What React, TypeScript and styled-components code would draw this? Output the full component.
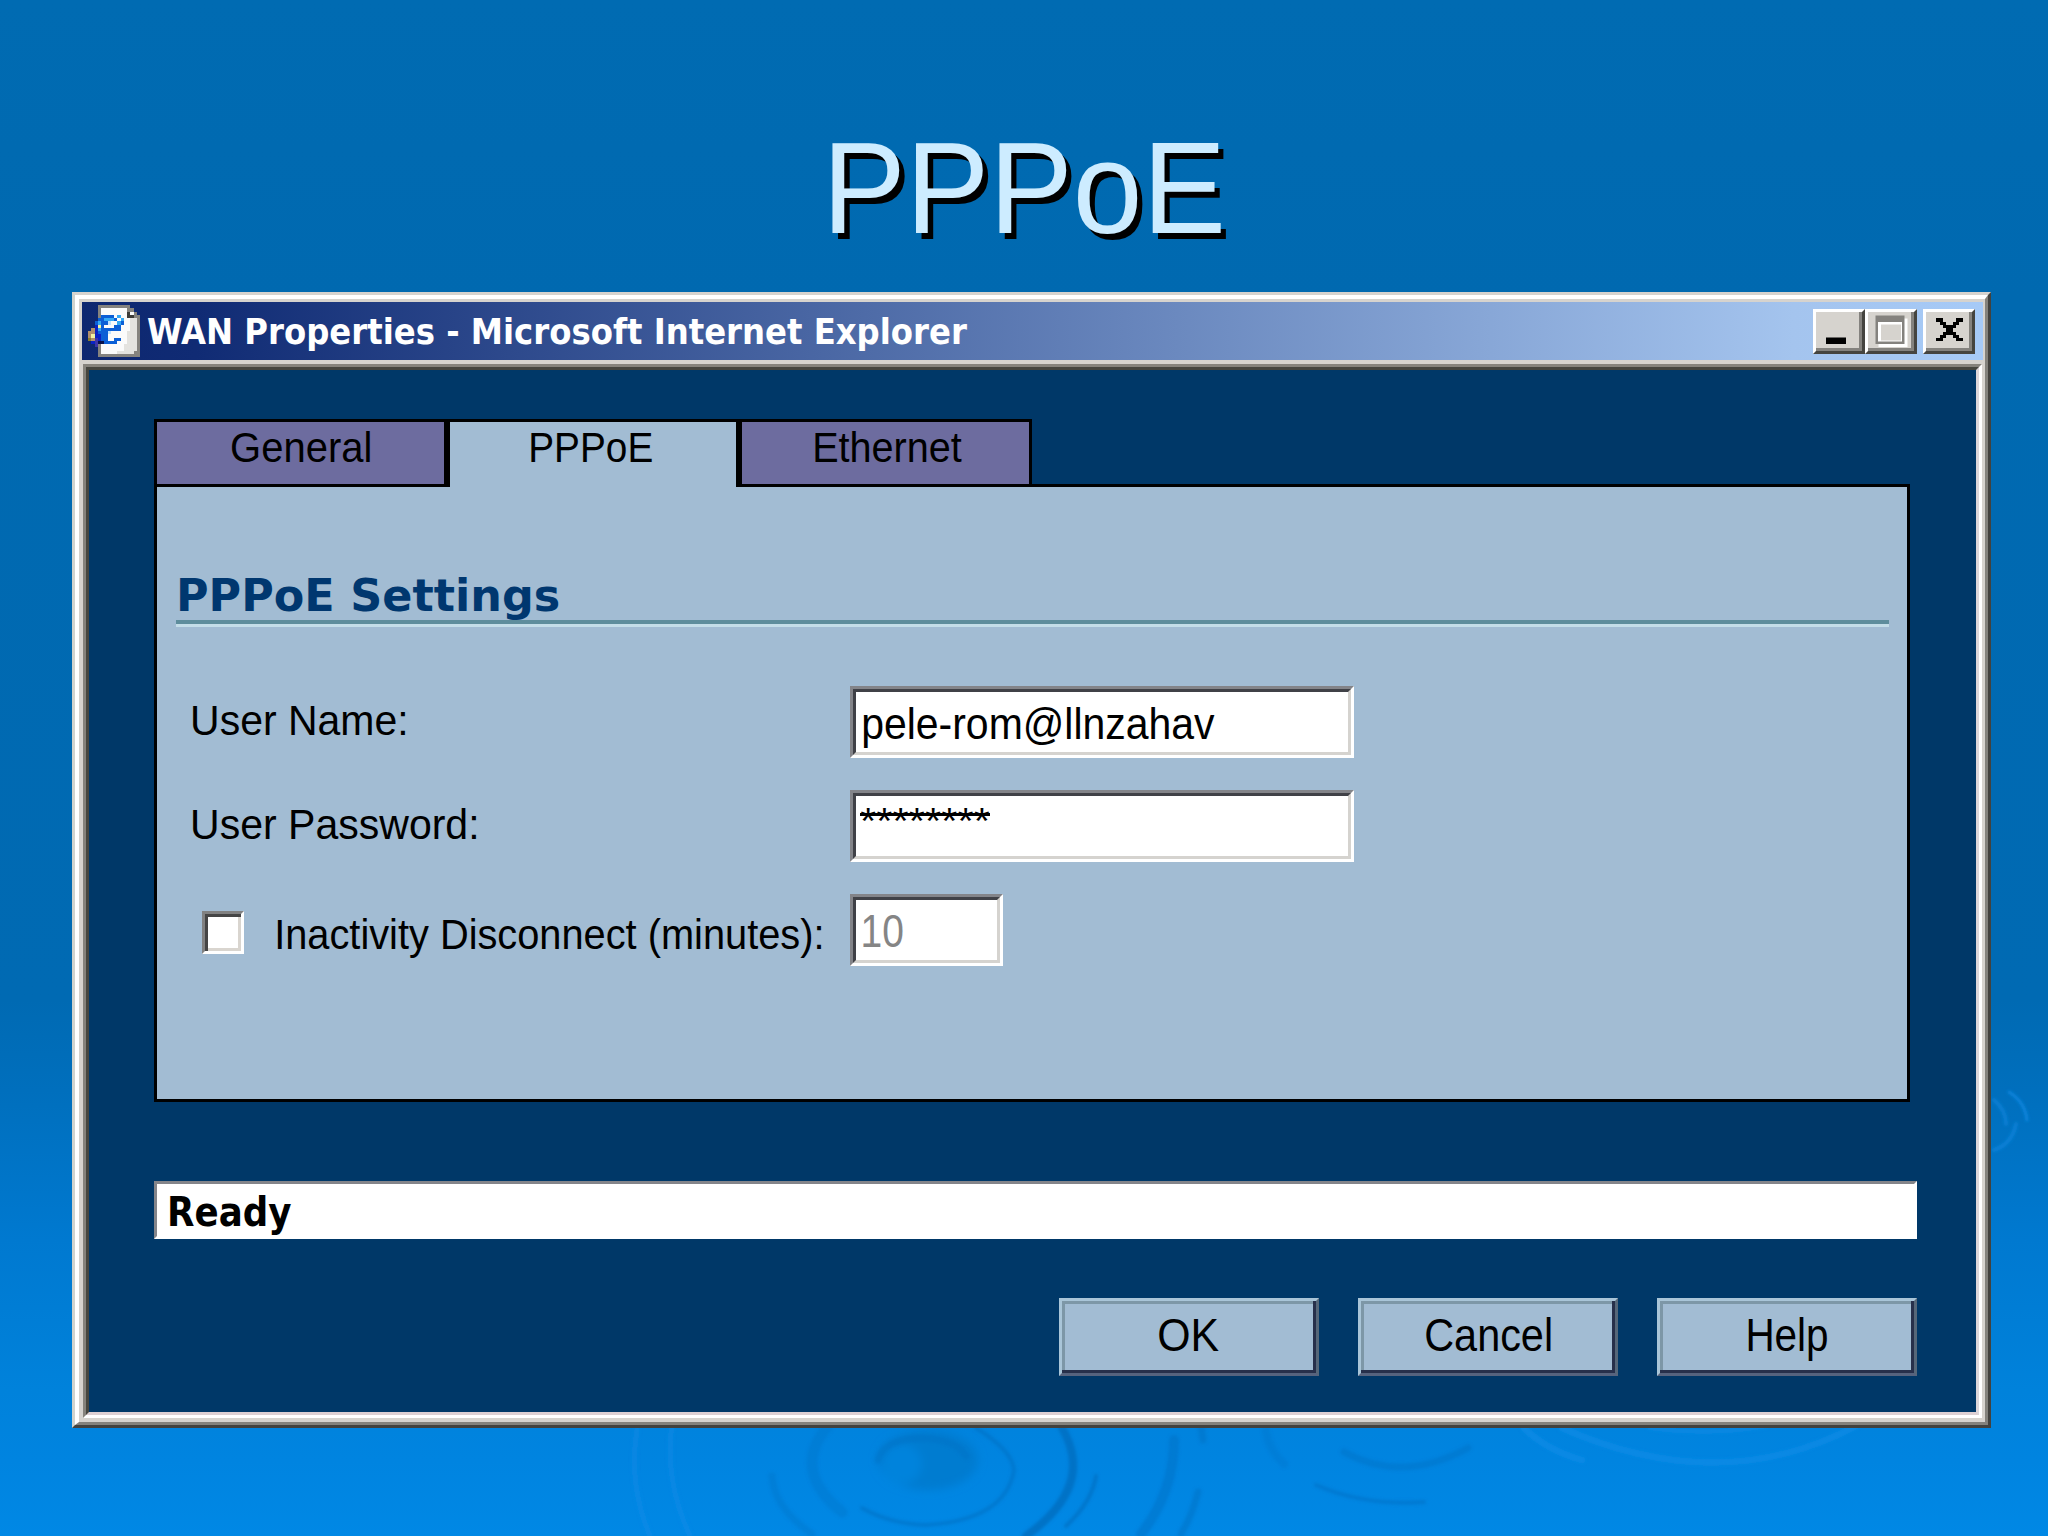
import React from "react";
import styled, { createGlobalStyle } from "styled-components";

const SANS = '"Liberation Sans", Arial, sans-serif';
const UI = '"DejaVu Sans Condensed", "DejaVu Sans", sans-serif';
const WIDE = '"DejaVu Sans", sans-serif';

const Global = createGlobalStyle`
  body { margin: 0; background: #0069b1; overflow: hidden; }
  * { box-sizing: border-box; }
`;

/* ---------- fitted text ---------- */

const FitBox = styled.span<{ $line: number; $dx: number; $dy: number }>`
  display: block;
  flex: none;
  height: ${(p) => p.$line}px;
  line-height: ${(p) => p.$line}px;
  margin-top: ${(p) => p.$dy}px;
  margin-left: ${(p) => p.$dx}px;
  text-align: left;
  white-space: nowrap;
`;

const FitInk = styled.span<{ $size: number; $family: string; $bold: boolean }>`
  display: inline-block;
  transform-origin: 0 50%;
  font-family: ${(p) => p.$family};
  font-size: ${(p) => p.$size}px;
  font-weight: ${(p) => (p.$bold ? 700 : 400)};
`;

type FitProps = {
  children: string;
  width: number;
  size: number;
  family?: string;
  bold?: boolean;
  line?: number;
  dx?: number;
  dy?: number;
};

let pen: CanvasRenderingContext2D | null = null;

/* Sets a run of text so that its ink is exactly `width` pixels wide. */
function Fit({ children, width, size, family = SANS, bold = false, line = 50, dx = 0, dy = 0 }: FitProps) {
  pen = pen || document.createElement("canvas").getContext("2d")!;
  pen.font = `${bold ? 700 : 400} ${size}px ${family}`;
  const m = pen.measureText(children);
  const scale = width / (m.actualBoundingBoxLeft + m.actualBoundingBoxRight);
  return (
    <FitBox $line={line} $dx={dx} $dy={dy} style={{ width }}>
      <FitInk
        $size={size}
        $family={family}
        $bold={bold}
        style={{ transform: `scaleX(${scale}) translateX(${m.actualBoundingBoxLeft}px)` }}
      >
        {children}
      </FitInk>
    </FitBox>
  );
}

/* ---------- slide ---------- */

const Slide = styled.main`
  position: relative;
  width: 2048px;
  height: 1536px;
  overflow: hidden;
  display: flex;
  flex-direction: column;
  padding: 113px 0 0 72px;
  background: linear-gradient(
    #006bb2 0, #0069b0 300px, #006ab3 1000px, #006fbd 1090px,
    #0079d0 1240px, #0082db 1390px, #0084e0 1460px, #0088e5 1536px
  );
`;

const Ripples = styled.svg`
  position: absolute;
  inset: 0;
  fill: none;
  stroke-linecap: round;
`;

const SlideTitle = styled.h1`
  position: relative;
  margin: 0 0 29px 760px;
  height: 150px;
  color: #cdecff;
  text-shadow: 5.5px 5.5px 0 #000;
`;

/* ---------- window ---------- */

const Frame = styled.section`
  position: relative;
  width: 1919px;
  height: 1136px;
  background: #d6d3ce;
  border: 3px solid;
  border-color: #d6d3ce #43423e #43423e #d0d3ce;
`;

const FrameInner = styled.div`
  width: 100%;
  height: 100%;
  display: flex;
  flex-direction: column;
  border: solid;
  border-width: 4px 3px 3px 4px;
  border-color: #fff #84827c #84827c #fff;
  padding: 3px 3px 4px 3px;
`;

const TitleBar = styled.header`
  display: flex;
  align-items: center;
  height: 58px;
  margin-right: -1px;
  padding: 0 8px 0 6px;
  background: linear-gradient(90deg, #0d2770 0, #102b74 6%, #a4c4ee 90%, #a6caf7 100%);
  color: #fff;
`;

const PageIcon = styled.svg`
  flex: none;
  width: 52px;
  height: 52px;
  margin-right: 7px;
`;

const Controls = styled.div`
  display: flex;
  margin-left: auto;
`;

const Control = styled.button<{ $gap?: number }>`
  width: 52px;
  height: 45px;
  margin: 0 0 0 ${(p) => p.$gap || 0}px;
  padding: 0;
  border: 3px solid;
  border-color: #fff #45443f #45443f #fff;
  background: #d6d3ce;
  box-shadow: inset -3px -3px 0 #84827e;
`;

const Glyph = styled.svg`
  display: block;
  width: 46px;
  height: 39px;
`;

const Client = styled.div`
  flex: 1;
  margin: 4px 0 0 1px;
  border: 3px solid;
  border-color: #86837c #fff #fff #86837c;
`;

const ClientInner = styled.div`
  height: 100%;
  border: 3px solid;
  border-color: #46463f #dcd6da #ddd0d3 #46463f;
  background: #003868;
  padding: 49px 59px 0 65px;
  display: flex;
  flex-direction: column;
`;

/* ---------- tabs and panel ---------- */

const Tabs = styled.nav`
  position: relative;
  display: flex;
  width: 878px;
  margin-bottom: -3px;
`;

const Tab = styled.div<{ $active?: boolean }>`
  flex: 1;
  height: 68px;
  display: flex;
  justify-content: center;
  border: 3px solid #000;
  border-bottom-width: ${(p) => (p.$active ? 0 : 3)}px;
  background: ${(p) => (p.$active ? "#a2bcd3" : "#6d6c9f")};
  color: #000;
`;

const Panel = styled.section`
  width: 1756px;
  height: 618px;
  border: 3px solid #000;
  background: #a2bcd3;
  padding: 83px 18px 0 19px;
`;

const Heading = styled.h2`
  margin: 0;
  height: 54px;
  padding: 1px 0 0 3px;
  border-bottom: 4px solid #5e8d9c;
  box-shadow: 0 3px 0 #c4dde8;
  color: #00376f;
`;

const Form = styled.div`
  display: grid;
  grid-template-columns: 659px auto;
  grid-auto-rows: 72px;
  row-gap: 32px;
  margin: 62px 0 0 15px;
  justify-content: start;
`;

const LabelCell = styled.label<{ $shift?: number }>`
  display: flex;
  align-items: center;
  padding-top: ${(p) => Math.max(0, p.$shift || 0)}px;
  padding-bottom: ${(p) => Math.max(0, -(p.$shift || 0))}px;
  color: #000;
`;

const CheckBox = styled.span`
  width: 42px;
  height: 43px;
  margin: 0 33px 6px 11px;
  border: 3px solid;
  border-color: #818181 #fff #fff #818181;
  background: #fff;
  box-shadow: inset 3px 3px 0 #454545, inset -3px -3px 0 #d9d5cf;
`;

const Field = styled.div<{ $width: number; $disabled?: boolean }>`
  width: ${(p) => p.$width}px;
  height: 72px;
  border: 3px solid;
  border-color: #838489 #fff #fff #838489;
  background: #fff;
  color: ${(p) => (p.$disabled ? "#858585" : "#000")};
`;

const FieldInner = styled.div<{ $pad: number }>`
  height: 100%;
  display: flex;
  align-items: center;
  padding-left: ${(p) => p.$pad}px;
  border: 3px solid;
  border-color: #404147 #d5d3cf #d5d3cf #404147;
`;

const Mask = styled.div`
  display: flex;
  margin-top: -8px;
  background: linear-gradient(#000, #000) 0 16px / 100% 3px no-repeat;
`;

/* ---------- footer ---------- */

const Status = styled.div`
  height: 58px;
  margin-top: 79px;
  padding-left: 13px;
  display: flex;
  align-items: center;
  background: #fff;
  border: 3px solid;
  border-color: #84858a #fff #fff #84858a;
  color: #000;
`;

const Buttons = styled.div`
  display: flex;
  justify-content: flex-end;
  gap: 39px;
  margin-top: 59px;
`;

const PushButton = styled.button`
  width: 260px;
  height: 78px;
  padding: 0;
  display: flex;
  align-items: center;
  justify-content: center;
  border: 3px solid;
  border-color: #a9c5d8 #566779 #56637e #a9c5d8;
  background: #a2bcd3;
  box-shadow: inset -3px -3px 0 #27304b, inset 3px 3px 0 #7d97a7;
  color: #000;
`;

/* ---------- pixel drawings ---------- */

const ICON_COLORS: Record<string, string> = {
  g: "#85837e",
  d: "#3c3c38",
  w: "#fbfbfa",
  s: "#e4e3df",
  b: "#0b5fd6",
  n: "#0a22c4",
  c: "#35a8f4",
  l: "#bfe3ff",
  y: "#f2f2a0",
  t: "#b08f6c",
  o: "#8a7d2c",
  k: "#08104a",
  v: "#3d35a8",
};

const ICON_ROWS = [
  "...gggggggggg...",
  "...gwwwwwwwwgg..",
  "...gwwwwwwwwdwg.",
  "...gbbbbwcwwddgg",
  "...bbcccbwcwwssg",
  "..bcbblwwcbwwssg",
  "..nybwwwbbwwwssg",
  ".tncbbbbbbwwwssg",
  "ttnbbblwwwwwsssg",
  "tynnbbwwwwwwsssg",
  "otvnbbwwbbwwsssg",
  ".nvkkbbbbwwwsssg",
  "..vgwwwwwwwssssg",
  "...gwwwwwwwssssg",
  "...gwwwwwsssssgg",
  "...ggggggggggggg",
];

const CROSS_ROWS = ["11....11", ".11..11.", "..1111..", "...11...", "..1111..", ".11..11.", "11....11"];

function Pixels({ rows, colors }: { rows: string[]; colors: Record<string, string> }) {
  return (
    <g shapeRendering="crispEdges">
      {rows.flatMap((row, y) =>
        [...row].map((c, x) =>
          c === "." ? null : <rect key={`${x}-${y}`} x={x} y={y} width={1} height={1} fill={colors[c]} />
        )
      )}
    </g>
  );
}

function Background() {
  return (
    <Ripples width="2048" height="1536" viewBox="0 0 2048 1536">
      <defs>
        <filter id="soft" x="-10%" y="-10%" width="120%" height="120%">
          <feGaussianBlur stdDeviation="1.6" />
        </filter>
        <filter id="softer" x="-20%" y="-20%" width="140%" height="140%">
          <feGaussianBlur stdDeviation="4" />
        </filter>
      </defs>
      <g filter="url(#softer)">
        <ellipse cx="928" cy="1460" rx="50" ry="30" fill="#007bd0" />
        <ellipse cx="902" cy="1464" rx="20" ry="20" fill="#0083dc" />
      </g>
      <g filter="url(#soft)" stroke="#0072c6">
        <path d="M878 1460 Q884 1439 920 1438 Q956 1439 966 1456" strokeWidth="7" opacity=".45" />
        <path d="M976 1428 Q1012 1450 1014 1470 Q1006 1520 926 1525 Q890 1524 862 1508" strokeWidth="4" opacity=".65" />
        <path d="M828 1426 Q790 1470 842 1512" strokeWidth="11" opacity=".35" />
        <path d="M1062 1428 Q1096 1486 1026 1536" strokeWidth="8" />
        <path d="M1096 1476 Q1092 1502 1066 1526" strokeWidth="4" opacity=".8" />
        <path d="M1174 1440 Q1174 1492 1141 1534" strokeWidth="10" opacity=".5" />
        <path d="M1201 1426 L1203 1440 M1198 1492 Q1192 1516 1181 1534" strokeWidth="7" opacity=".55" />
        <path d="M772 1476 Q774 1508 812 1534" strokeWidth="7" opacity=".35" />
        <path d="M1344 1452 Q1402 1484 1468 1448" strokeWidth="7" opacity=".45" />
        <path d="M1266 1432 Q1270 1452 1284 1464" strokeWidth="8" opacity=".3" />
        <path d="M1316 1485 Q1364 1506 1424 1502" strokeWidth="4" opacity=".6" />
      </g>
      <g filter="url(#soft)" stroke="#1590ec">
        <path d="M672 1424 Q664 1480 690 1536 M637 1430 Q628 1484 650 1536" strokeWidth="6" opacity=".3" />
        <path d="M1524 1428 Q1546 1450 1582 1460 M1562 1428 Q1720 1498 1856 1426" strokeWidth="7" opacity=".4" />
        <path d="M1650 1428 Q1710 1436 1766 1426" strokeWidth="5" opacity=".35" />
        <path d="M2009 1092 Q2025 1102 2027 1120" strokeWidth="3" opacity=".7" />
        <path d="M1994 1100 Q2006 1110 2006 1124 M2016 1124 Q2012 1144 1994 1150" strokeWidth="4" opacity=".45" />
      </g>
    </Ripples>
  );
}

export default function App() {
  return (
    <Slide>
      <Global />
      <Background />
      <SlideTitle>
        <Fit width={389} size={129} line={150}>PPPoE</Fit>
      </SlideTitle>
      <Frame>
        <FrameInner>
          <TitleBar>
            <PageIcon viewBox="0 0 16 16">
              <Pixels rows={ICON_ROWS} colors={ICON_COLORS} />
            </PageIcon>
            <Fit width={820} size={35.7} family={UI} bold dy={1}>
              WAN Properties - Microsoft Internet Explorer
            </Fit>
            <Controls>
              <Control aria-label="Minimize">
                <Glyph><rect x="10" y="25.5" width="20" height="6.5" fill="#000" /></Glyph>
              </Control>
              <Control aria-label="Maximize">
                <Glyph>
                  <path d="M10.500 6.500h29v28.500h-29z" fill="#fff" />
                  <path d="M7.500 3.500h29v28.500h-29z" fill="#84827e" />
                  <path d="M10 10h24v19.500h-24z" fill="#fff" />
                  <path d="M13 12.500h20v16h-20z" fill="#d6d3ce" />
                </Glyph>
              </Control>
              <Control aria-label="Close" $gap={6}>
                <Glyph>
                  <g transform="translate(10.300 6.300) scale(3.300)">
                    <Pixels rows={CROSS_ROWS} colors={{ "1": "#000" }} />
                  </g>
                </Glyph>
              </Control>
            </Controls>
          </TitleBar>
          <Client>
            <ClientInner>
              <Tabs>
                <Tab><Fit width={138} size={42.5} dx={1} dy={1}>General</Fit></Tab>
                <Tab $active><Fit width={121} size={42.5} dx={-4} dy={1}>PPPoE</Fit></Tab>
                <Tab><Fit width={147} size={42.5} dx={5} dy={1}>Ethernet</Fit></Tab>
              </Tabs>
              <Panel>
                <Heading>
                  <Fit width={379} size={44} family={WIDE} bold dx={1}>PPPoE Settings</Fit>
                </Heading>
                <Form>
                  <LabelCell $shift={-2}>
                    <Fit width={212} size={42} dx={2}>User Name:</Fit>
                  </LabelCell>
                  <Field $width={504}>
                    <FieldInner $pad={7}><Fit width={352} size={45} dy={3}>pele-rom@llnzahav</Fit></FieldInner>
                  </Field>
                  <LabelCell $shift={-2}>
                    <Fit width={283} size={42} dx={2}>User Password:</Fit>
                  </LabelCell>
                  <Field $width={504}>
                    <FieldInner $pad={4}>
                      <Mask><Fit width={130} size={36}>********</Fit></Mask>
                    </FieldInner>
                  </Field>
                  <LabelCell $shift={10}>
                    <CheckBox />
                    <Fit width={544} size={42}>Inactivity Disconnect (minutes):</Fit>
                  </LabelCell>
                  <Field $width={153} $disabled>
                    <FieldInner $pad={7}><Fit width={39.5} size={46} dy={1}>10</Fit></FieldInner>
                  </Field>
                </Form>
              </Panel>
              <Status>
                <Fit width={121} size={40} family={UI} bold dy={4}>Ready</Fit>
              </Status>
              <Buttons>
                <PushButton><Fit width={60} size={46.5} dy={-5}>OK</Fit></PushButton>
                <PushButton><Fit width={125} size={46.5} dy={-5}>Cancel</Fit></PushButton>
                <PushButton><Fit width={79} size={46.5} dy={-5}>Help</Fit></PushButton>
              </Buttons>
            </ClientInner>
          </Client>
        </FrameInner>
      </Frame>
    </Slide>
  );
}
